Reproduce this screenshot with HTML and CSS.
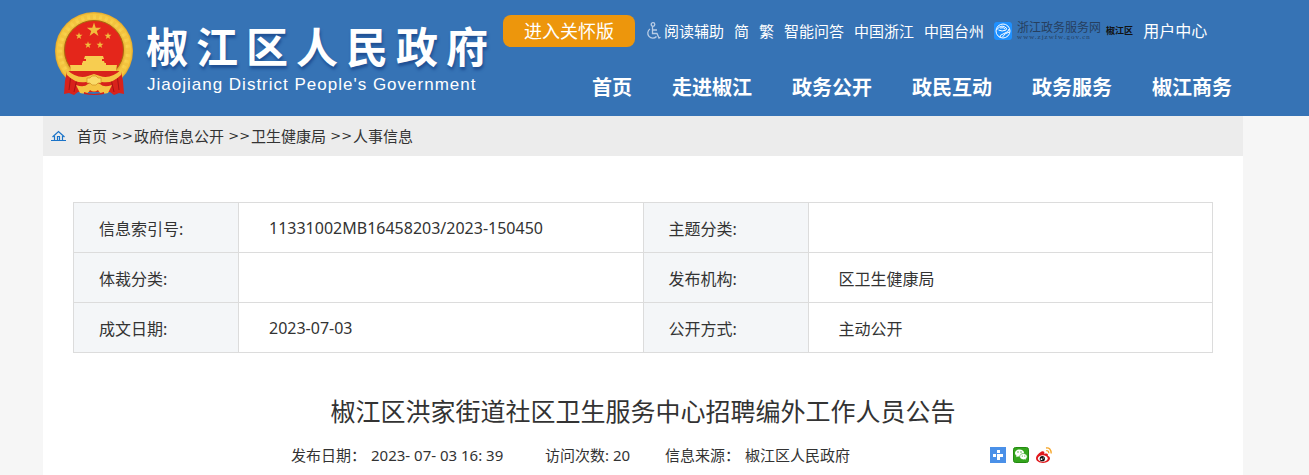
FILE: index.html
```html
<!DOCTYPE html>
<html lang="zh-CN">
<head>
    <meta charset="UTF-8">
    <meta name="viewport" content="width=device-width, initial-scale=1.0">
    <title>椒江区洪家街道社区卫生服务中心招聘编外工作人员公告</title>
    <link rel="stylesheet" href="styles.css">
</head>
<body>
    <header class="header">
        <div class="header-inner">
            <a class="logo" href="#">
                <svg class="emblem" viewBox="0 0 78 84" aria-hidden="true">
                    <defs>
                        <radialGradient id="gold" cx="50%" cy="50%" r="50%">
                            <stop offset="74%" stop-color="#dfa024"/>
                            <stop offset="84%" stop-color="#f9d24e"/>
                            <stop offset="94%" stop-color="#f6c840"/>
                            <stop offset="100%" stop-color="#e2a52a"/>
                        </radialGradient>
                        <path id="star" d="M0-10 2.3-3.1 9.5-3.1 3.7 1.2 5.9 8.1 0 3.8-5.9 8.1-3.7 1.2-9.5-3.1-2.3-3.1z"/>
                    </defs>
                    <circle cx="39" cy="39" r="39" fill="url(#gold)"/>
                    <circle cx="39" cy="39" r="34" fill="none" stroke="#f0bd3a" stroke-width="5" stroke-dasharray="3 3" opacity=".6"/>
                    <circle cx="39" cy="38" r="29.500" fill="#e4261b" stroke="#a8680f"/>
                    <g fill="#f2bd3c">
                        <use href="#star" transform="translate(39 18) scale(.75)"/>
                        <use href="#star" transform="translate(24 24) scale(.37)"/>
                        <use href="#star" transform="translate(53 24) scale(.37)"/>
                        <use href="#star" transform="translate(33 33) scale(.37)"/>
                        <use href="#star" transform="translate(45 33) scale(.37)"/>
                    </g>
                    <path d="M30 44h18l1 3h-20zM31 47h16v2h2l1 3H27l1-3h3zM27 51h24v2h11l-1 6H16l-1-6h12z" fill="#f7cd50"/>
                    <path d="M12 59h54l2 10 1 13-5-1-5 2-4-3H23l-4 3-5-2-5 1 1-13z" fill="#d8221b"/>
                    <path d="M16 62l-2 16M22 67l-3 13M56 67l3 13M62 62l2 16" stroke="#a51214" fill="none"/>
                    <path d="M11 57q12 11 22 7l6-2 6 2q10 4 22-7l-1 6q-9 9-19 7l-8 2-8-2q-10 2-19-7z" fill="#f5c544"/>
                    <path d="M21 73q8 3 12-1l6-3 6 3q4 4 12 1l-4 8q-8 2-10-3-4 3-8 0-2 5-10 3z" fill="#f5c544"/>
                    <path d="M32 66h3l2-2h4l2 2h3v5h-3l-2 2h-4l-2-2h-3z" fill="#fadb68" stroke="#c98718" stroke-width=".6"/>
                    <path d="M29 80q10 4 20 0v2q-10 2-20 0z" fill="#d2201b"/>
                </svg>
                <span class="logo-text">
                    <span class="logo-cn">椒江区人民政府</span>
                    <span class="logo-en">Jiaojiang District People's Government</span>
                </span>
            </a>
            <div class="header-right">
                <div class="top-bar">
                    <button type="button" class="care-button">进入关怀版</button>
                    <div class="top-links">
                        <a class="assist" href="#">
                            <svg class="wheelchair" viewBox="0 0 16 18" aria-hidden="true">
                                <g fill="none" stroke="#b9cde6" stroke-width="1.300">
                                    <circle cx="8" cy="2.500" r="1.800"/>
                                    <path d="M7.500 4.500v7h4.500l2 4.500 1.500-.8M8 8h4M5 7a5 5 0 1 0 6.500 7.500"/>
                                </g>
                            </svg>阅读辅助</a>
                        <a href="#">简</a>
                        <a href="#">繁</a>
                        <a href="#">智能问答</a>
                        <a href="#">中国浙江</a>
                        <a href="#">中国台州</a>
                        <a class="service" href="#">
                            <svg class="service-icon" viewBox="0 0 18 18" aria-hidden="true">
                                <rect width="18" height="18" rx="3" fill="#1e90ff"/>
                                <g fill="none" stroke="#fff">
                                    <circle cx="9" cy="9" r="7"/>
                                    <path d="M2.500 8Q6 3 10 4.500T12 8Q8 10 4.500 8M6 6q4-1 5 1M15 7q0 3-5 4.500t-4 4M15.500 10q-5 1-7 5"/>
                                </g>
                            </svg>
                            <span class="service-text">
                                <span class="service-name">浙江政务服务网</span>
                                <span class="service-url">www.zjzwfw.gov.cn</span>
                            </span>
                            <span class="service-area">椒江区</span>
                        </a>
                        <a class="user" href="#">用户中心</a>
                    </div>
                </div>
                <nav class="nav">
                    <a href="#">首页</a>
                    <a href="#">走进椒江</a>
                    <a href="#">政务公开</a>
                    <a href="#">政民互动</a>
                    <a href="#">政务服务</a>
                    <a href="#">椒江商务</a>
                </nav>
            </div>
        </div>
    </header>

    <div class="page">
        <main class="main">
            <div class="breadcrumb">
                <svg class="home" viewBox="0 0 16 12" aria-hidden="true">
                    <path d="M0 10.500h15M1.500 7l6-5.500 6 5.500M3.500 6v4.500M11.500 6v4.500M6.500 10V6.500h2V10" fill="none" stroke="#1a73c8" stroke-width="1.200"/>
                </svg>
                <a href="#">首页</a>
                <span class="sep">&gt;&gt;</span>
                <a href="#">政府信息公开</a>
                <span class="sep">&gt;&gt;</span>
                <a href="#">卫生健康局</a>
                <span class="sep">&gt;&gt;</span>
                <a href="#">人事信息</a>
            </div>

            <div class="article">
                <table class="info">
                    <tr>
                        <th scope="row">信息索引号:</th>
                        <td>11331002MB16458203/2023-150450</td>
                        <th scope="row">主题分类:</th>
                        <td></td>
                    </tr>
                    <tr>
                        <th scope="row">体裁分类:</th>
                        <td></td>
                        <th scope="row">发布机构:</th>
                        <td>区卫生健康局</td>
                    </tr>
                    <tr>
                        <th scope="row">成文日期:</th>
                        <td>2023-07-03</td>
                        <th scope="row">公开方式:</th>
                        <td>主动公开</td>
                    </tr>
                </table>

                <h1 class="title">椒江区洪家街道社区卫生服务中心招聘编外工作人员公告</h1>

                <div class="meta">
                    <span class="meta-item"><span>发布日期：</span><span>2023- 07- 03 16: 39</span></span>
                    <span>访问次数: 20</span>
                    <span class="meta-item"><span>信息来源：</span><span>椒江区人民政府</span></span>
                    <span class="share">
                        <a href="#" aria-label="更多">
                            <svg viewBox="0 0 16 16">
                                <rect width="16" height="16" fill="#4a90e8"/>
                                <path d="M7 3h3v3H7zM7 7h6v3h-3v3H7zM3 7h3v3H3z" fill="#fff"/>
                            </svg>
                        </a>
                        <a href="#" aria-label="微信">
                            <svg viewBox="0 0 16 16">
                                <rect x=".5" y=".5" width="15" height="15" rx="2" fill="#34a51c" stroke="#238a10"/>
                                <path d="M6.500 2.500c-2.600 0-4.500 1.600-4.500 3.500 0 1.100.6 2 1.600 2.700L3.200 10.200l1.700-.8 1.600.2c2.600 0 4.500-1.600 4.500-3.600S9.100 2.500 6.500 2.500z" fill="#fff"/>
                                <path d="M10.500 6.500c-2.200 0-3.800 1.400-3.800 3.100s1.600 3.100 3.800 3.100l1.200-.2 1.500.8-.4-1.300c.9-.6 1.400-1.400 1.400-2.400 0-1.700-1.600-3.100-3.700-3.100z" fill="#fff" stroke="#34a51c" stroke-width=".6"/>
                                <g fill="#34a51c"><circle cx="5" cy="5" r=".7"/><circle cx="8" cy="5" r=".7"/><circle cx="9.300" cy="9" r=".6"/><circle cx="11.800" cy="9" r=".6"/></g>
                            </svg>
                        </a>
                        <a href="#" aria-label="微博">
                            <svg viewBox="0 0 16 16">
                                <path d="M6.500 4.200C4 4.600 0 8.500 0 11.300 0 14 3.300 16 7 16c4.200 0 7-2.500 7-4.700 0-1.400-1-2.200-2.200-2.600.6-1.900-.7-2.700-3.500-1.700.4-1.700 0-2.900-1.800-2.800z" fill="#e0181c"/>
                                <ellipse cx="6.800" cy="11.500" rx="4.900" ry="3.300" fill="#fff"/>
                                <circle cx="6.300" cy="11.700" r="2.600" fill="#111"/>
                                <circle cx="5.500" cy="12.200" r=".9" fill="#fff"/>
                                <circle cx="7.300" cy="11" r=".5" fill="#fff"/>
                                <path d="M10 1q5-.8 5.200 5.500M10.200 3.600q2.600-.2 2.600 2.600" fill="none" stroke="#f5a62a" stroke-width="1.300"/>
                            </svg>
                        </a>
                    </span>
                </div>
            </div>
        </main>
    </div>
</body>
</html>
```

FILE: styles.css
```css
* {
    box-sizing: border-box;
}
body {
    display: flex;
    flex-direction: column;
    min-height: 100vh;
    margin: 0;
    font-family: "Noto Sans", "Noto Sans CJK SC", sans-serif;
    font-size: 15px;
    color: #333;
    background-color: #f6f6f6;
}
a {
    color: inherit;
    text-decoration: none;
}
svg {
    display: block;
    flex: none;
}

/* header */
.header {
    padding-right: 23px;
    background-color: #3673b5;
    color: #fff;
}
.header-inner {
    display: flex;
    max-width: 1200px;
    height: 116px;
    margin: 0 auto;
    padding-left: 12px;
    white-space: nowrap;
}
.logo {
    display: flex;
    width: 448px;
    padding-top: 12px;
    gap: 13px;
}
.emblem {
    width: 78px;
    height: 84px;
}
.logo-text {
    display: flex;
    flex-direction: column;
    padding-top: 10px;
}
.logo-cn {
    font-size: 42px;
    font-weight: bold;
    line-height: 50px;
    letter-spacing: 8px;
    text-shadow: 1px 3px 3px #1f4f93;
}
.logo-en {
    padding-left: 1px;
    font-family: "Liberation Sans", Arial, sans-serif;
    font-size: 17px;
    line-height: 26px;
    letter-spacing: 1px;
}
.header-right {
    flex: 1;
    padding-top: 15px;
}
.top-bar {
    display: flex;
    align-items: center;
    gap: 10px;
}
.care-button {
    height: 32px;
    padding: 0 21px;
    border: none;
    border-radius: 8px;
    background-color: #ed960c;
    color: #fff;
    font-family: inherit;
    font-size: 18px;
    line-height: 32px;
    cursor: pointer;
}
.top-links {
    display: flex;
    align-items: center;
    gap: 10px;
    line-height: 32px;
}
.assist {
    display: flex;
    align-items: center;
    gap: 3px;
}
.wheelchair {
    width: 16px;
    height: 18px;
}
.service {
    display: flex;
    align-items: center;
    gap: 5px;
    color: #111;
}
.service-icon {
    width: 18px;
    height: 18px;
}
.service-text {
    display: flex;
    flex-direction: column;
    color: #263f5f;
}
.service-name {
    font-family: "Liberation Serif", "Noto Sans CJK SC", serif;
    font-size: 12px;
    line-height: 12px;
}
.service-url {
    font-family: "Liberation Serif", serif;
    font-size: 7px;
    line-height: 6px;
    letter-spacing: 1px;
}
.service-area {
    font-size: 9px;
    font-weight: bold;
}
.user {
    font-size: 16px;
}
.nav {
    display: flex;
    gap: 40px;
    padding: 25px 0 0 89px;
    font-size: 20px;
    font-weight: bold;
    line-height: 32px;
}

/* content */
.page {
    display: flex;
    flex: 1;
    padding-right: 23px;
}
.main {
    width: 100%;
    max-width: 1200px;
    margin: 0 auto;
    background-color: #fff;
}
.breadcrumb {
    display: flex;
    align-items: center;
    height: 40px;
    padding: 0 8px 1px;
    background-color: #ececec;
}
.home {
    width: 16px;
    height: 12px;
    margin-right: 10px;
}
.sep {
    width: 27px;
    padding-right: 1px;
    font-family: "DejaVu Sans", sans-serif;
    font-size: 13px;
    text-align: right;
}
.article {
    padding: 46px 30px 0;
}
.info {
    width: 100%;
    border-collapse: collapse;
    table-layout: fixed;
    font-size: 16px;
}
.info th,
.info td {
    height: 50px;
    padding: 0 0 0 30px;
    border: 1px solid #dcdcdc;
    text-align: left;
}
.info th {
    width: 165px;
    padding-left: 25px;
    background-color: #f4f6f8;
    font-weight: normal;
}
.title {
    margin: 39px 0 0;
    font-size: 25px;
    font-weight: normal;
    line-height: 38px;
    text-align: center;
}
.meta {
    display: grid;
    grid-template-columns: 254px 120px 1fr auto;
    align-items: center;
    padding: 14px 161px 0 218px;
    line-height: 22px;
}
.meta-item {
    display: flex;
    gap: 5px;
}
.share {
    display: flex;
    gap: 7px;
}
.share svg {
    width: 16px;
    height: 16px;
}
```
